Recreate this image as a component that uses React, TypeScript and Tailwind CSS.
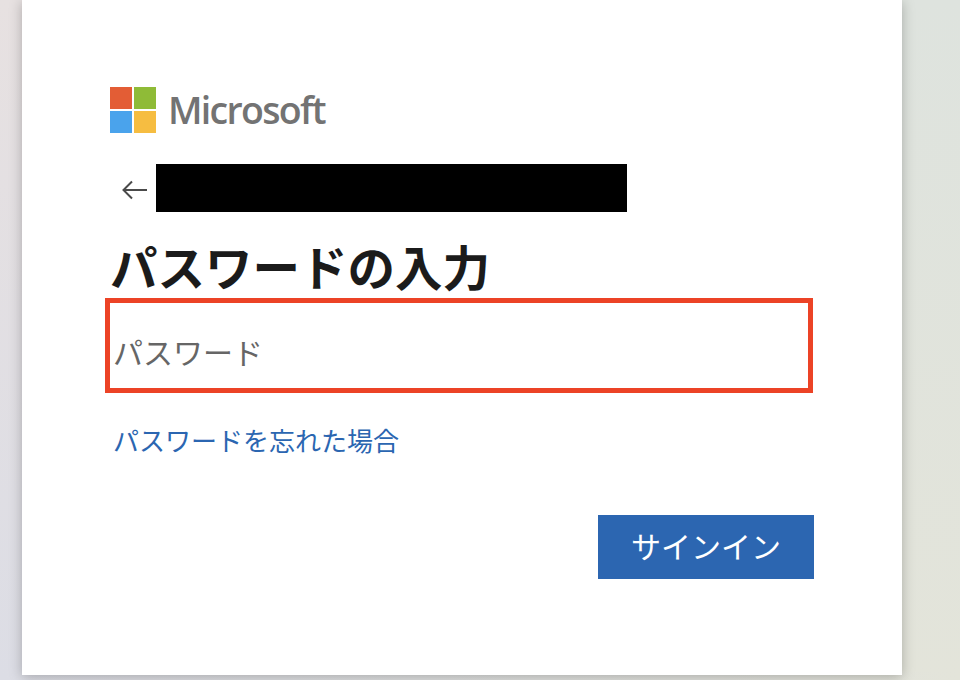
export default function App() {
  return (
    <div className="h-[680px] w-[960px] overflow-hidden bg-[linear-gradient(to_right,#dcdde5,#e3e4da),linear-gradient(to_bottom,#e7e1e1,#dcdde5),linear-gradient(to_bottom,#dee3de,#e3e4da)] bg-[size:100%_8px,50%_100%,100%_100%] bg-[position:0_100%,0_0,0_0] bg-no-repeat font-['Noto_Sans_CJK_JP','Noto_Sans',sans-serif]">
      <main className="ml-[22px] flex h-[675px] w-[880px] flex-col bg-white pt-[87px] pl-[83px] shadow-[0_2px_12px_rgba(0,0,0,0.25)]">
        <div className="ml-[5px] flex h-[46px] items-center gap-[12px]">
          <div className="grid h-[46px] w-[46px] grid-cols-2 gap-[2px]">
            <span className="bg-[#e35d35]" />
            <span className="bg-[#8fbb37]" />
            <span className="bg-[#4aa3ec]" />
            <span className="bg-[#f6bd41]" />
          </div>
          <span className="font-['Open_Sans',sans-serif] text-[37.5px] leading-[46px] font-semibold tracking-[-1.7px] text-[#737373]">Microsoft</span>
        </div>

        <div className="mt-[31px] ml-[17px] flex h-[48px] items-center gap-[9px]">
          <svg className="mt-[4px]" width="25" height="20" viewBox="0 0 25 20" fill="none" stroke="#4a4a4a" strokeWidth="2" aria-hidden="true">
            <path d="M25 10H1.5M10 1.5L1.5 10L10 18.5" />
          </svg>
          <div className="h-[48px] w-[471px] bg-black" />
        </div>

        <h1 className="mt-[25px] ml-[5px] text-[47.5px] leading-[58px] font-bold whitespace-nowrap text-[#1b1b1b]">パスワードの入力</h1>

        <div className="mt-[3px] flex h-[95px] w-[708px] items-center border-[5px] border-[#ec4326] pl-[3px]">
          <span className="pt-[10px] text-[30px] leading-[44px] text-[#666666]">パスワード</span>
        </div>

        <a className="mt-[28px] ml-[8px] text-[26px] leading-[38px] text-[#2b66b1]">パスワードを忘れた場合</a>

        <button className="mt-[56px] ml-[493px] flex h-[64px] w-[216px] items-center justify-center bg-[#2c66b1] pb-[4px] text-[30px] leading-[44px] text-white">サインイン</button>
      </main>
    </div>
  );
}
